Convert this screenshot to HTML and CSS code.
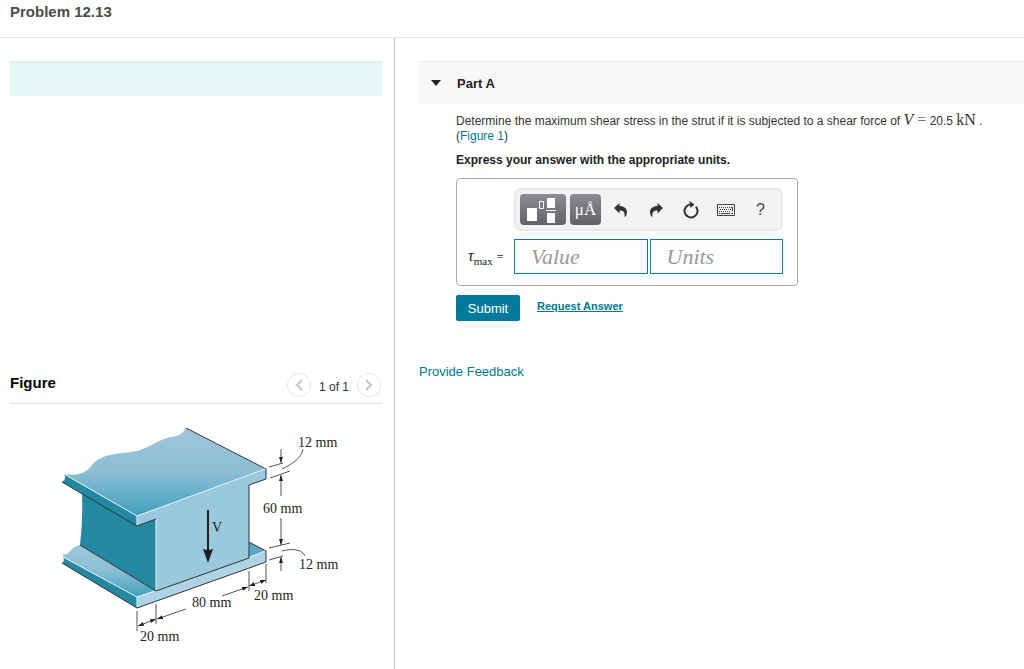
FILE: index.html
```html
<!DOCTYPE html>
<html lang="en">
<head>
    <meta charset="UTF-8">
    <meta name="viewport" content="width=device-width, initial-scale=1.0">
    <title>Problem 12.13</title>
    <link rel="stylesheet" href="styles.css">
</head>
<body>
    <header class="page-header">
        <h1>Problem 12.13</h1>
    </header>

    <div class="columns">
        <aside class="left-panel">
            <div class="intro-bar"></div>

            <div class="figure-header">
                <h2>Figure</h2>
                <div class="pager">
                    <button type="button" class="pager-btn" aria-label="Previous figure">
                        <svg width="8" height="12" viewBox="0 0 8 12"><path d="M7 1L2 6l5 5"/></svg>
                    </button>
                    <span>1 of 1</span>
                    <button type="button" class="pager-btn" aria-label="Next figure">
                        <svg width="8" height="12" viewBox="0 0 8 12"><path d="M1 1l5 5-5 5"/></svg>
                    </button>
                </div>
            </div>

            <svg class="strut" width="310" height="235" viewBox="50 415 310 235" role="img" aria-label="Strut cross section">
                <defs>
                    <linearGradient id="topFace" x1="0" y1="0" x2="0" y2="1">
                        <stop offset="0" stop-color="#a0c6da"/>
                        <stop offset="0.5" stop-color="#8bbfd5"/>
                        <stop offset="1" stop-color="#3fa0bd"/>
                    </linearGradient>
                    <marker id="arrow" viewBox="0 0 6 4" refX="6" refY="2" markerWidth="6" markerHeight="4" markerUnits="userSpaceOnUse" orient="auto-start-reverse">
                        <path d="M0 0l6 2-6 2z" fill="#231f20"/>
                    </marker>
                </defs>

                <!-- bottom flange -->
                <path d="M63 554C70 556 71 546 80 545L156 591L137 597L63 557Z" fill="url(#topFace)"/>
                <path d="M63 557L137 597V608L62 563Q65 561 63 557Z" fill="#2389a3"/>
                <path d="M249 542L266 551L249 558Z" fill="#5ba9c4"/>
                <path d="M137 597L266 551V562L137 608Z" fill="#aed3e5"/>
                <path class="edge" d="M62 563L137 608L266 562V551L249 542"/>
                <path class="shine" d="M63 557L137 597L155 591M137 597V607M250 557L265 551"/>

                <!-- web -->
                <path d="M82 493L156 519V591L80 545Q83 520 82 493Z" fill="#2389a3"/>
                <path d="M137 516L266 469V479L249 485V558L156 591V519L137 526Z" fill="#9ac8dd"/>
                <path class="edge" d="M80 545L156 591L249 558V485L266 479V469"/>
                <path class="shine" d="M156 519V590"/>

                <!-- top flange -->
                <path d="M64 474L137 516V526L62 482Q67 479 64 474Z" fill="#2389a3"/>
                <path d="M64 474C74 476 85 475 92 465C101 453 121 454 137 451C151 447 154 442 167 438C178 435 180 437 186 428L266 469L137 516Z" fill="url(#topFace)"/>
                <path class="edge" d="M186 428L266 469M62 482L137 526L156 519"/>
                <path class="shine" d="M64 474L137 516L265 469M137 516V525"/>

                <!-- shear force -->
                <path d="M208 510V550" stroke="#231f20" stroke-width="2"/>
                <path d="M203 549q5 2 10 0l-5 14z" fill="#231f20"/>

                <!-- dimension lines -->
                <g class="dim">
                    <path d="M269 467L283 463M270 478L290 471M269 548L290 543M269 560L283 556"/>
                    <path d="M303 449C302 458 292 464 282 469M282 551C290 549 301 548 305 556"/>
                    <path d="M281 449V463" marker-end="url(#arrow)"/>
                    <path d="M281 496V475" marker-end="url(#arrow)"/>
                    <path d="M281 518V545" marker-end="url(#arrow)"/>
                    <path d="M281 571V557" marker-end="url(#arrow)"/>
                    <path d="M137 611V631M156 604V624M249 571V591M266 564V583"/>
                    <path d="M138 626L156 619" marker-start="url(#arrow)" marker-end="url(#arrow)"/>
                    <path d="M186 609L157 619" marker-end="url(#arrow)"/>
                    <path d="M222 596L248 587" marker-end="url(#arrow)"/>
                    <path d="M249 586L266 580" marker-start="url(#arrow)" marker-end="url(#arrow)"/>
                </g>
                <g class="dim-text">
                    <text x="298" y="447">12 mm</text>
                    <text x="263" y="513">60 mm</text>
                    <text x="299" y="569">12 mm</text>
                    <text x="254" y="600">20 mm</text>
                    <text x="192" y="607">80 mm</text>
                    <text x="140" y="641">20 mm</text>
                    <text x="212" y="532">V</text>
                </g>
            </svg>
        </aside>

        <main class="right-panel">
            <div class="part-header">
                <svg width="10" height="6" viewBox="0 0 10 6"><path d="M0 0h10L5 6z" fill="#222"/></svg>
                <h2>Part A</h2>
            </div>

            <div class="part-body">
                <p class="question">Determine the maximum shear stress in the strut if it is subjected to a shear force of <span class="math"><i>V</i> <span class="equals">=</span></span> 20.5 <span class="math">kN</span> .<br>(<a href="#">Figure 1</a>)</p>
                <p class="instructions">Express your answer with the appropriate units.</p>

                <form>
                    <div class="answer-box">
                        <div class="toolbar">
                            <button type="button" class="tool dark wide" aria-label="Templates">
                                <svg width="34" height="26" viewBox="0 0 34 26" fill="#fff">
                                    <path d="M1 11h10v13H1zM21 1h8v10h-8zM20 13h10v1H20zM21 16h8v10h-8z"/>
                                    <path d="M13.500 4.500h4v7h-4z" fill="none" stroke="#fff"/>
                                </svg>
                            </button>
                            <button type="button" class="tool dark" aria-label="Symbols">μÅ</button>
                            <button type="button" class="tool" aria-label="Undo">
                                <svg width="14" height="14" viewBox="0 0 14 14"><path d="M0 5L5.500 0v3C11 3 15 7 12 13l-1.500 1C11 9 9.500 7.500 5.500 7.500V10.500z" fill="#333"/></svg>
                            </button>
                            <button type="button" class="tool" aria-label="Redo">
                                <svg width="14" height="14" viewBox="0 0 14 14"><path d="M14 5L8.500 0v3C3 3-1 7 2 13l1.500 1C3 9 4.500 7.500 8.500 7.500V10.500z" fill="#333"/></svg>
                            </button>
                            <button type="button" class="tool" aria-label="Reset">
                                <svg width="16" height="18" viewBox="0 0 16 18"><path d="M8 3.500A6.500 6.500 0 1 0 12.800 5.600" fill="none" stroke="#333" stroke-width="2"/><path d="M6.500 0L11.500 3.500 7.500 7z" fill="#333"/></svg>
                            </button>
                            <button type="button" class="tool" aria-label="Keyboard">
                                <svg width="18" height="12" viewBox="0 0 18 12" fill="none" stroke="#444"><path d="M.5.500h17v11H.500z"/><path d="M2 3.500h14M3 5.500h13M2 7.500h12" stroke-dasharray="1 1"/><path d="M2 9.500h1M4 9.500h9M14 9.500h2M15.500 3v4"/></svg>
                            </button>
                            <button type="button" class="tool help" aria-label="Help">?</button>
                        </div>
                        <div class="fields">
                            <label for="value"><i>τ</i><sub>max</sub> <span>=</span></label>
                            <input type="text" id="value" placeholder="Value">
                            <input type="text" id="units" placeholder="Units" aria-label="Units">
                        </div>
                    </div>
                    <div class="actions">
                        <button type="submit" class="submit">Submit</button>
                        <a href="#">Request Answer</a>
                    </div>
                </form>
            </div>

            <a href="#" class="feedback">Provide Feedback</a>
        </main>
    </div>
</body>
</html>
```
FILE: styles.css
```css
* {
    box-sizing: border-box;
}

body {
    margin: 0;
    background-color: #fff;
    color: #333;
    font-family: "Liberation Sans", Arial, sans-serif;
    font-size: 12px;
    line-height: 15px;
}

h1,
h2,
p {
    margin: 0;
}

a {
    color: #007a94;
    text-decoration: none;
}

button {
    padding: 0;
    border: 0;
    background: none;
    font-family: inherit;
    cursor: pointer;
}

.page-header {
    height: 38px;
    padding: 3px 10px;
    border-bottom: 1px solid #e6e6e6;
}

.page-header h1 {
    color: #4c4c4c;
    font-size: 15px;
    line-height: 17px;
}

.columns {
    display: grid;
    grid-template-columns: 395px 1fr;
    min-height: calc(100vh - 38px);
}

/* Left side */
.left-panel {
    padding: 23px 12px 0 10px;
    border-right: 1px solid #b8c7dd;
}

.intro-bar {
    height: 35px;
    border-top: 2px solid #e4eaea;
    background-color: #e5f6f7;
}

.figure-header {
    display: flex;
    justify-content: space-between;
    align-items: flex-start;
    height: 31px;
    margin-top: 277px;
    border-bottom: 1px solid #e3e3e3;
}

.figure-header h2 {
    color: #000;
    font-size: 15px;
    line-height: 19px;
}

.pager {
    display: flex;
    align-items: center;
    gap: 8px;
    padding-right: 1px;
}

.pager span {
    padding-top: 4px;
}

.pager-btn {
    display: flex;
    align-items: center;
    justify-content: center;
    width: 24px;
    height: 24px;
    border: 1px solid #e6e6e6;
    border-radius: 50%;
}

.pager-btn path {
    fill: none;
    stroke: #c4c4c4;
    stroke-width: 2;
}

.strut {
    display: block;
    margin: 11px 0 0 40px;
}

.edge {
    fill: none;
    stroke: #333;
}

.shine {
    fill: none;
    stroke: #e3f4fa;
}

.dim {
    fill: none;
    stroke: #555;
}

.dim-text {
    fill: #231f20;
    font-family: "Liberation Serif", serif;
    font-size: 14px;
}

/* Right side */
.right-panel {
    padding: 23px 0 0 24px;
}

.part-header {
    display: flex;
    align-items: center;
    gap: 16px;
    height: 43px;
    padding-left: 12px;
    border-top: 1px solid #eaeaea;
    background-color: #f8f8f8;
}

.part-header h2 {
    color: #222;
    font-size: 13px;
}

.part-body {
    padding: 8px 0 0 37px;
}

.math {
    font-family: "Liberation Serif", serif;
    font-size: 16px;
}

.equals {
    color: #777;
}

.question {
    line-height: 15px;
}

.instructions {
    margin-top: 9px;
    color: #222;
    font-weight: bold;
}

.answer-box {
    width: 342px;
    margin-top: 10px;
    padding: 9px 14px 11px 11px;
    border: 1px solid #aaa;
    border-radius: 4px;
}

.toolbar {
    display: flex;
    align-items: center;
    gap: 4px;
    height: 43px;
    margin-left: 46px;
    padding: 0 4px;
    border: 2px solid #e9e9e9;
    border-radius: 7px;
    background-color: #f3f3f3;
}

.tool {
    display: flex;
    flex: none;
    align-items: center;
    justify-content: center;
    width: 31px;
    height: 31px;
}

.dark {
    border-radius: 4px;
    background: linear-gradient(#8b8b92, #636367);
    color: #fff;
    font-family: "Liberation Serif", serif;
    font-size: 17px;
}

.wide {
    width: 46px;
}

.help {
    color: #444;
    font-size: 16px;
}

.fields {
    display: flex;
    align-items: center;
    gap: 2px;
    margin-top: 8px;
}

.fields label {
    flex: none;
    width: 44px;
    color: #222;
    font-family: "Liberation Serif", serif;
    font-size: 16px;
}

.fields sub {
    font-size: 11px;
    line-height: 0;
}

.fields label span {
    font-size: 12px;
}

.fields input {
    flex: 1;
    min-width: 0;
    height: 35px;
    padding: 0 16px;
    border: 1px solid #007fa0;
    font-family: "Liberation Serif", serif;
    font-size: 22px;
}

.fields input::placeholder {
    color: #999;
    font-style: italic;
}

.actions {
    display: flex;
    align-items: center;
    gap: 17px;
    margin-top: 9px;
}

.submit {
    width: 64px;
    height: 26px;
    border-radius: 2px;
    background-color: #007a9b;
    color: #fff;
    font-size: 13px;
}

.actions a {
    padding-bottom: 3px;
    font-size: 11px;
    font-weight: bold;
    text-decoration: underline;
}

.feedback {
    display: inline-block;
    margin-top: 43px;
    font-size: 13px;
}
```
